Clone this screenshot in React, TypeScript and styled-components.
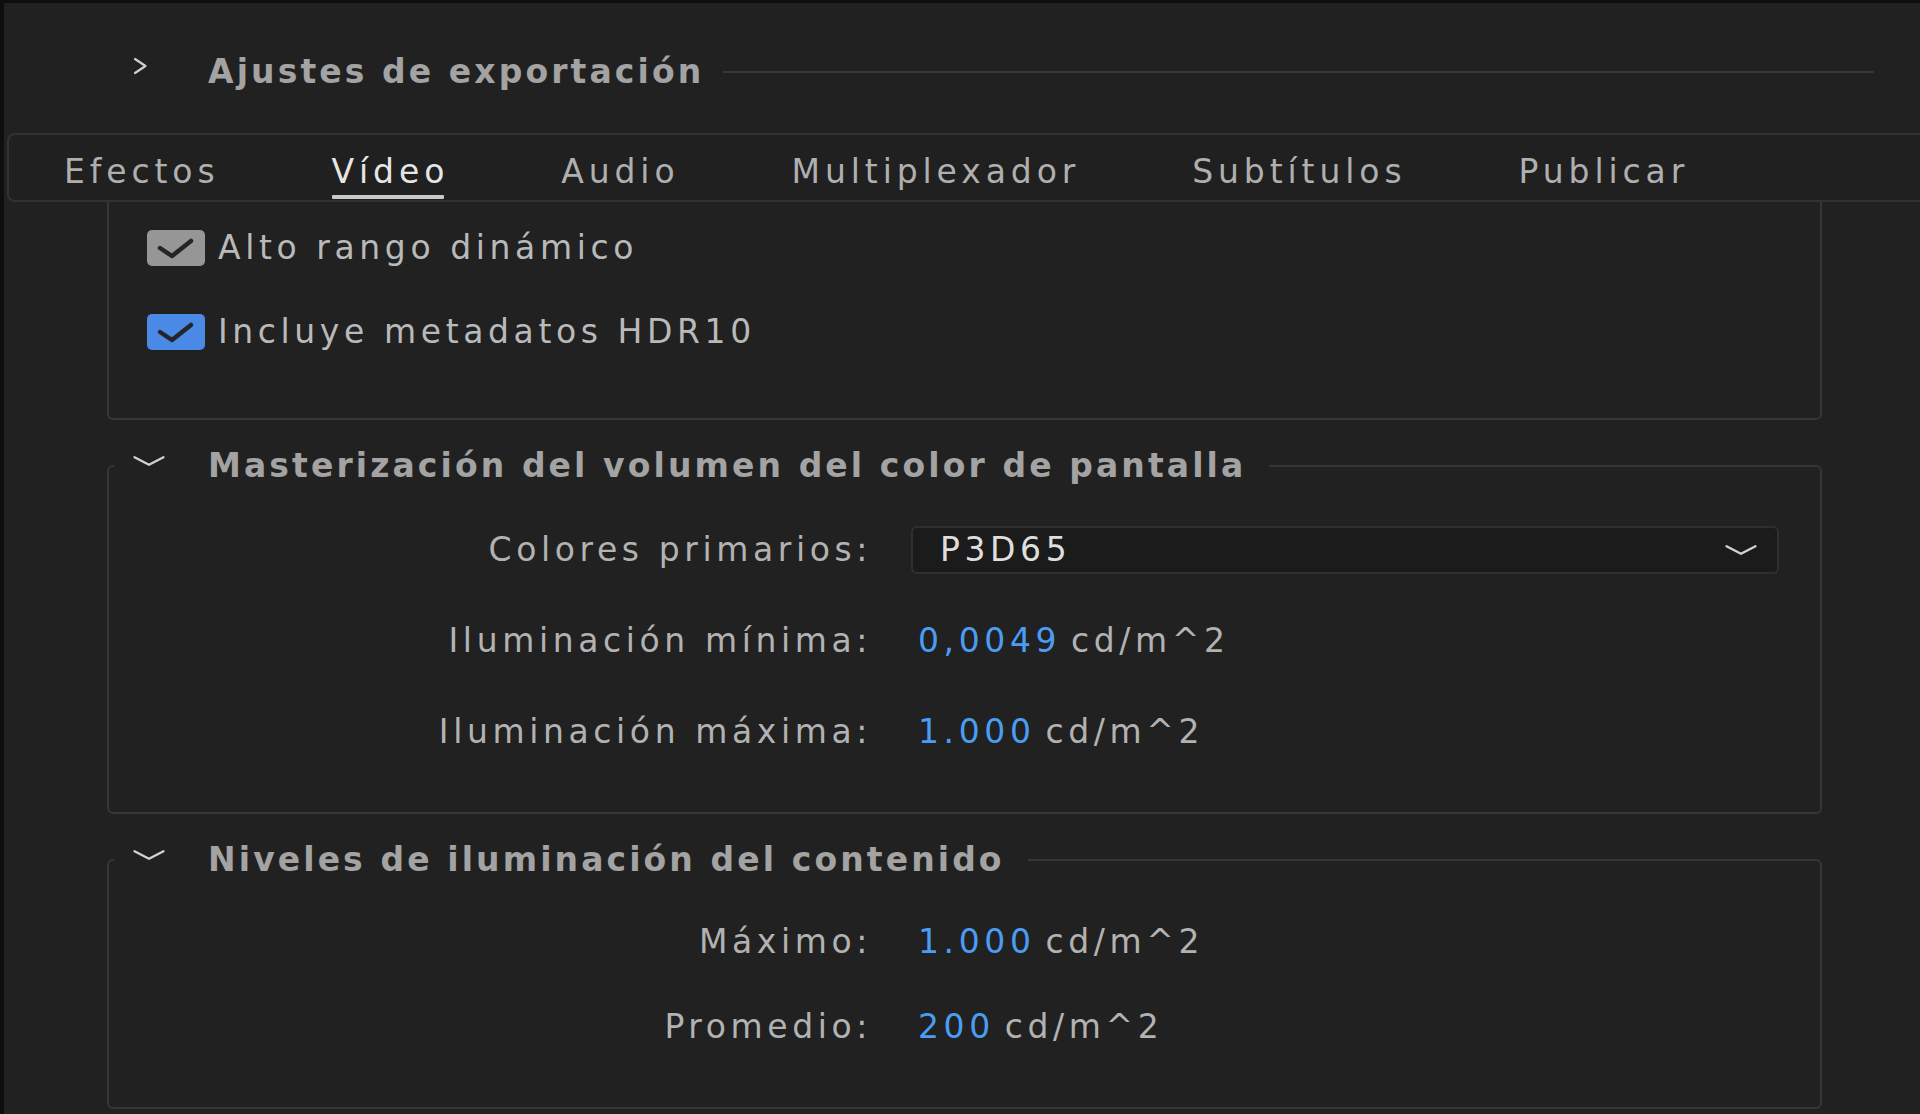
import React from "react";
import styled, { createGlobalStyle } from "styled-components";

const FONT = `"DejaVu Sans", "Open Sans", sans-serif`;

const GlobalStyle = createGlobalStyle`
  html, body {
    margin: 0;
    padding: 0;
    background: #0e0e0e;
    overflow: hidden;
  }
  body {
    font-family: ${FONT};
  }
`;

const Page = styled.div`
  width: 1920px;
  height: 1114px;
  box-sizing: border-box;
  padding: 3px 0 0 4px;
  background: #0e0e0e;
  display: flex;
`;

const Panel = styled.main`
  flex: 1;
  background: #212121;
  display: flex;
  flex-direction: column;
  overflow: hidden;
`;

const SectionHeader = styled.header`
  display: flex;
  align-items: center;
  height: 34px;
  margin: 52px 46px 0 128px;
`;

const ExpandIcon = styled.svg`
  width: 16px;
  height: 18px;
  align-self: flex-start;
  margin-top: 2px;
  flex: none;
`;

const SectionTitle = styled.h2`
  margin: 0 0 0 60px;
  font: 700 33px/34px ${FONT};
  letter-spacing: 3.1px;
  color: #a3a3a3;
  white-space: nowrap;
`;

const Rule = styled.div`
  flex: 1;
  height: 2px;
  margin-left: 19px;
  background: #373737;
`;

const TabBar = styled.nav`
  display: flex;
  gap: 112px;
  height: 69px;
  box-sizing: border-box;
  margin: 44px -12px 0 3px;
  padding-left: 55px;
  border: 2px solid #323232;
  border-right: none;
  border-radius: 8px 0 0 8px;
  background: #202020;
`;

const Tab = styled.button<{ $active?: boolean }>`
  display: flex;
  flex-direction: column;
  padding: 20px 0 0;
  margin: 0;
  border: none;
  background: none;
  cursor: pointer;
  font: 400 33px/34px ${FONT};
  letter-spacing: 4.9px;
  white-space: nowrap;
  color: ${(p) => (p.$active ? "#e6e6e6" : "#afafaf")};
`;

const TabUnderline = styled.span<{ $active?: boolean }>`
  height: 4px;
  margin: 6px 5px 0 0;
  border-radius: 1px;
  background: ${(p) => (p.$active ? "#c9c9c9" : "transparent")};
`;

const OpenGroup = styled.section`
  display: flex;
  flex-direction: column;
  gap: 48px;
  margin: 0 98px 0 103px;
  padding: 28px 0 68px 38px;
  border: 2px solid #363636;
  border-top: none;
  border-radius: 0 0 6px 6px;
`;

const CheckRow = styled.label`
  display: flex;
  align-items: center;
  gap: 13px;
  height: 36px;
  cursor: pointer;
`;

const CheckBox = styled.span<{ $tone: "gray" | "blue" }>`
  width: 58px;
  height: 36px;
  border-radius: 5px;
  flex: none;
  display: flex;
  align-items: center;
  justify-content: center;
  background: ${(p) => (p.$tone === "blue" ? "#4a8ae6" : "#969696")};
`;

const CheckLabel = styled.span`
  font: 400 33px/34px ${FONT};
  letter-spacing: 4.6px;
  color: #b9b9b9;
  white-space: nowrap;
`;

const Group = styled.fieldset<{ $padTop: number }>`
  margin: 29px 98px 0 103px;
  padding: ${(p) => p.$padTop}px 0 56px 0;
  border: 2px solid #363636;
  border-radius: 6px;
  min-inline-size: 0;
`;

const Legend = styled.legend`
  display: flex;
  align-items: center;
  height: 34px;
  margin-left: 5px;
  padding: 0 23px 0 0;
`;

const CollapseIcon = styled.svg`
  width: 32px;
  height: 10px;
  flex: none;
  margin: 0 43px 10px 19px;
`;

const GroupTitle = styled.span`
  font: 700 33px/34px ${FONT};
  letter-spacing: 3.1px;
  color: #a3a3a3;
  white-space: nowrap;
`;

const Rows = styled.div<{ $gap: number }>`
  display: grid;
  grid-template-columns: 763px 868px;
  grid-auto-rows: 48px;
  column-gap: 39px;
  row-gap: ${(p) => p.$gap}px;
  align-items: center;
`;

const FieldLabel = styled.span`
  text-align: right;
  font: 400 33px/34px ${FONT};
  letter-spacing: 4.6px;
  color: #b2b2b2;
  white-space: nowrap;
`;

const ValueCell = styled.div`
  display: flex;
  align-items: center;
  gap: 10px;
  padding-left: 7px;
  font: 400 33px/34px ${FONT};
  letter-spacing: 4.6px;
  white-space: nowrap;
`;

const NumberValue = styled.span`
  color: #4b9df4;
`;

const Unit = styled.span`
  color: #b2b2b2;
`;

const Select = styled.div`
  height: 48px;
  box-sizing: border-box;
  display: flex;
  align-items: center;
  justify-content: space-between;
  padding: 0 20px 0 27px;
  border: 2px solid #2f2f2f;
  border-radius: 6px;
  background: #1b1b1b;
  cursor: pointer;
`;

const SelectValue = styled.span`
  font: 400 33px/34px ${FONT};
  letter-spacing: 4.6px;
  color: #dedede;
`;

const SelectIcon = styled.svg`
  width: 32px;
  height: 10px;
  flex: none;
`;

const Chevron = ({ as: Comp }: { as: typeof CollapseIcon }) => (
  <Comp viewBox="0 0 32 10" fill="none">
    <polyline
      points="1.5,1.2 16,8.8 30.5,1.2"
      stroke="#d4d4d4"
      strokeWidth="2.2"
      strokeLinecap="round"
      strokeLinejoin="round"
    />
  </Comp>
);

const CheckMark = () => (
  <svg width="58" height="36" viewBox="0 0 58 36" fill="none">
    <polyline
      points="13,18 25,26 44,11"
      stroke="#252525"
      strokeWidth="4.5"
      strokeLinecap="round"
      strokeLinejoin="round"
    />
  </svg>
);

const tabs = ["Efectos", "Vídeo", "Audio", "Multiplexador", "Subtítulos", "Publicar"];

type Measure = { label: string; value: string; unit: string };

const mastering: Measure[] = [
  { label: "Iluminación mínima:", value: "0,0049", unit: "cd/m^2" },
  { label: "Iluminación máxima:", value: "1.000", unit: "cd/m^2" },
];

const content: Measure[] = [
  { label: "Máximo:", value: "1.000", unit: "cd/m^2" },
  { label: "Promedio:", value: "200", unit: "cd/m^2" },
];

const MeasureRow = ({ m }: { m: Measure }) => (
  <>
    <FieldLabel>{m.label}</FieldLabel>
    <ValueCell>
      <NumberValue>{m.value}</NumberValue>
      <Unit>{m.unit}</Unit>
    </ValueCell>
  </>
);

export default function App() {
  return (
    <>
      <GlobalStyle />
      <Page>
        <Panel>
          <SectionHeader>
            <ExpandIcon viewBox="0 0 16 18" fill="none">
              <polyline
                points="3,2 13.5,9 3,16"
                stroke="#cfcfcf"
                strokeWidth="2.2"
                strokeLinecap="round"
                strokeLinejoin="round"
              />
            </ExpandIcon>
            <SectionTitle>Ajustes de exportación</SectionTitle>
            <Rule />
          </SectionHeader>

          <TabBar>
            {tabs.map((t) => (
              <Tab key={t} $active={t === "Vídeo"}>
                {t}
                <TabUnderline $active={t === "Vídeo"} />
              </Tab>
            ))}
          </TabBar>

          <OpenGroup>
            <CheckRow>
              <CheckBox $tone="gray">
                <CheckMark />
              </CheckBox>
              <CheckLabel>Alto rango dinámico</CheckLabel>
            </CheckRow>
            <CheckRow>
              <CheckBox $tone="blue">
                <CheckMark />
              </CheckBox>
              <CheckLabel>Incluye metadatos HDR10</CheckLabel>
            </CheckRow>
          </OpenGroup>

          <Group $padTop={43}>
            <Legend>
              <Chevron as={CollapseIcon} />
              <GroupTitle>Masterización del volumen del color de pantalla</GroupTitle>
            </Legend>
            <Rows $gap={43}>
              <FieldLabel>Colores primarios:</FieldLabel>
              <Select>
                <SelectValue>P3D65</SelectValue>
                <Chevron as={SelectIcon} />
              </Select>
              {mastering.map((m) => (
                <MeasureRow key={m.label} m={m} />
              ))}
            </Rows>
          </Group>

          <Group $padTop={41}>
            <Legend>
              <Chevron as={CollapseIcon} />
              <GroupTitle>Niveles de iluminación del contenido</GroupTitle>
            </Legend>
            <Rows $gap={37}>
              {content.map((m) => (
                <MeasureRow key={m.label} m={m} />
              ))}
            </Rows>
          </Group>
        </Panel>
      </Page>
    </>
  );
}
